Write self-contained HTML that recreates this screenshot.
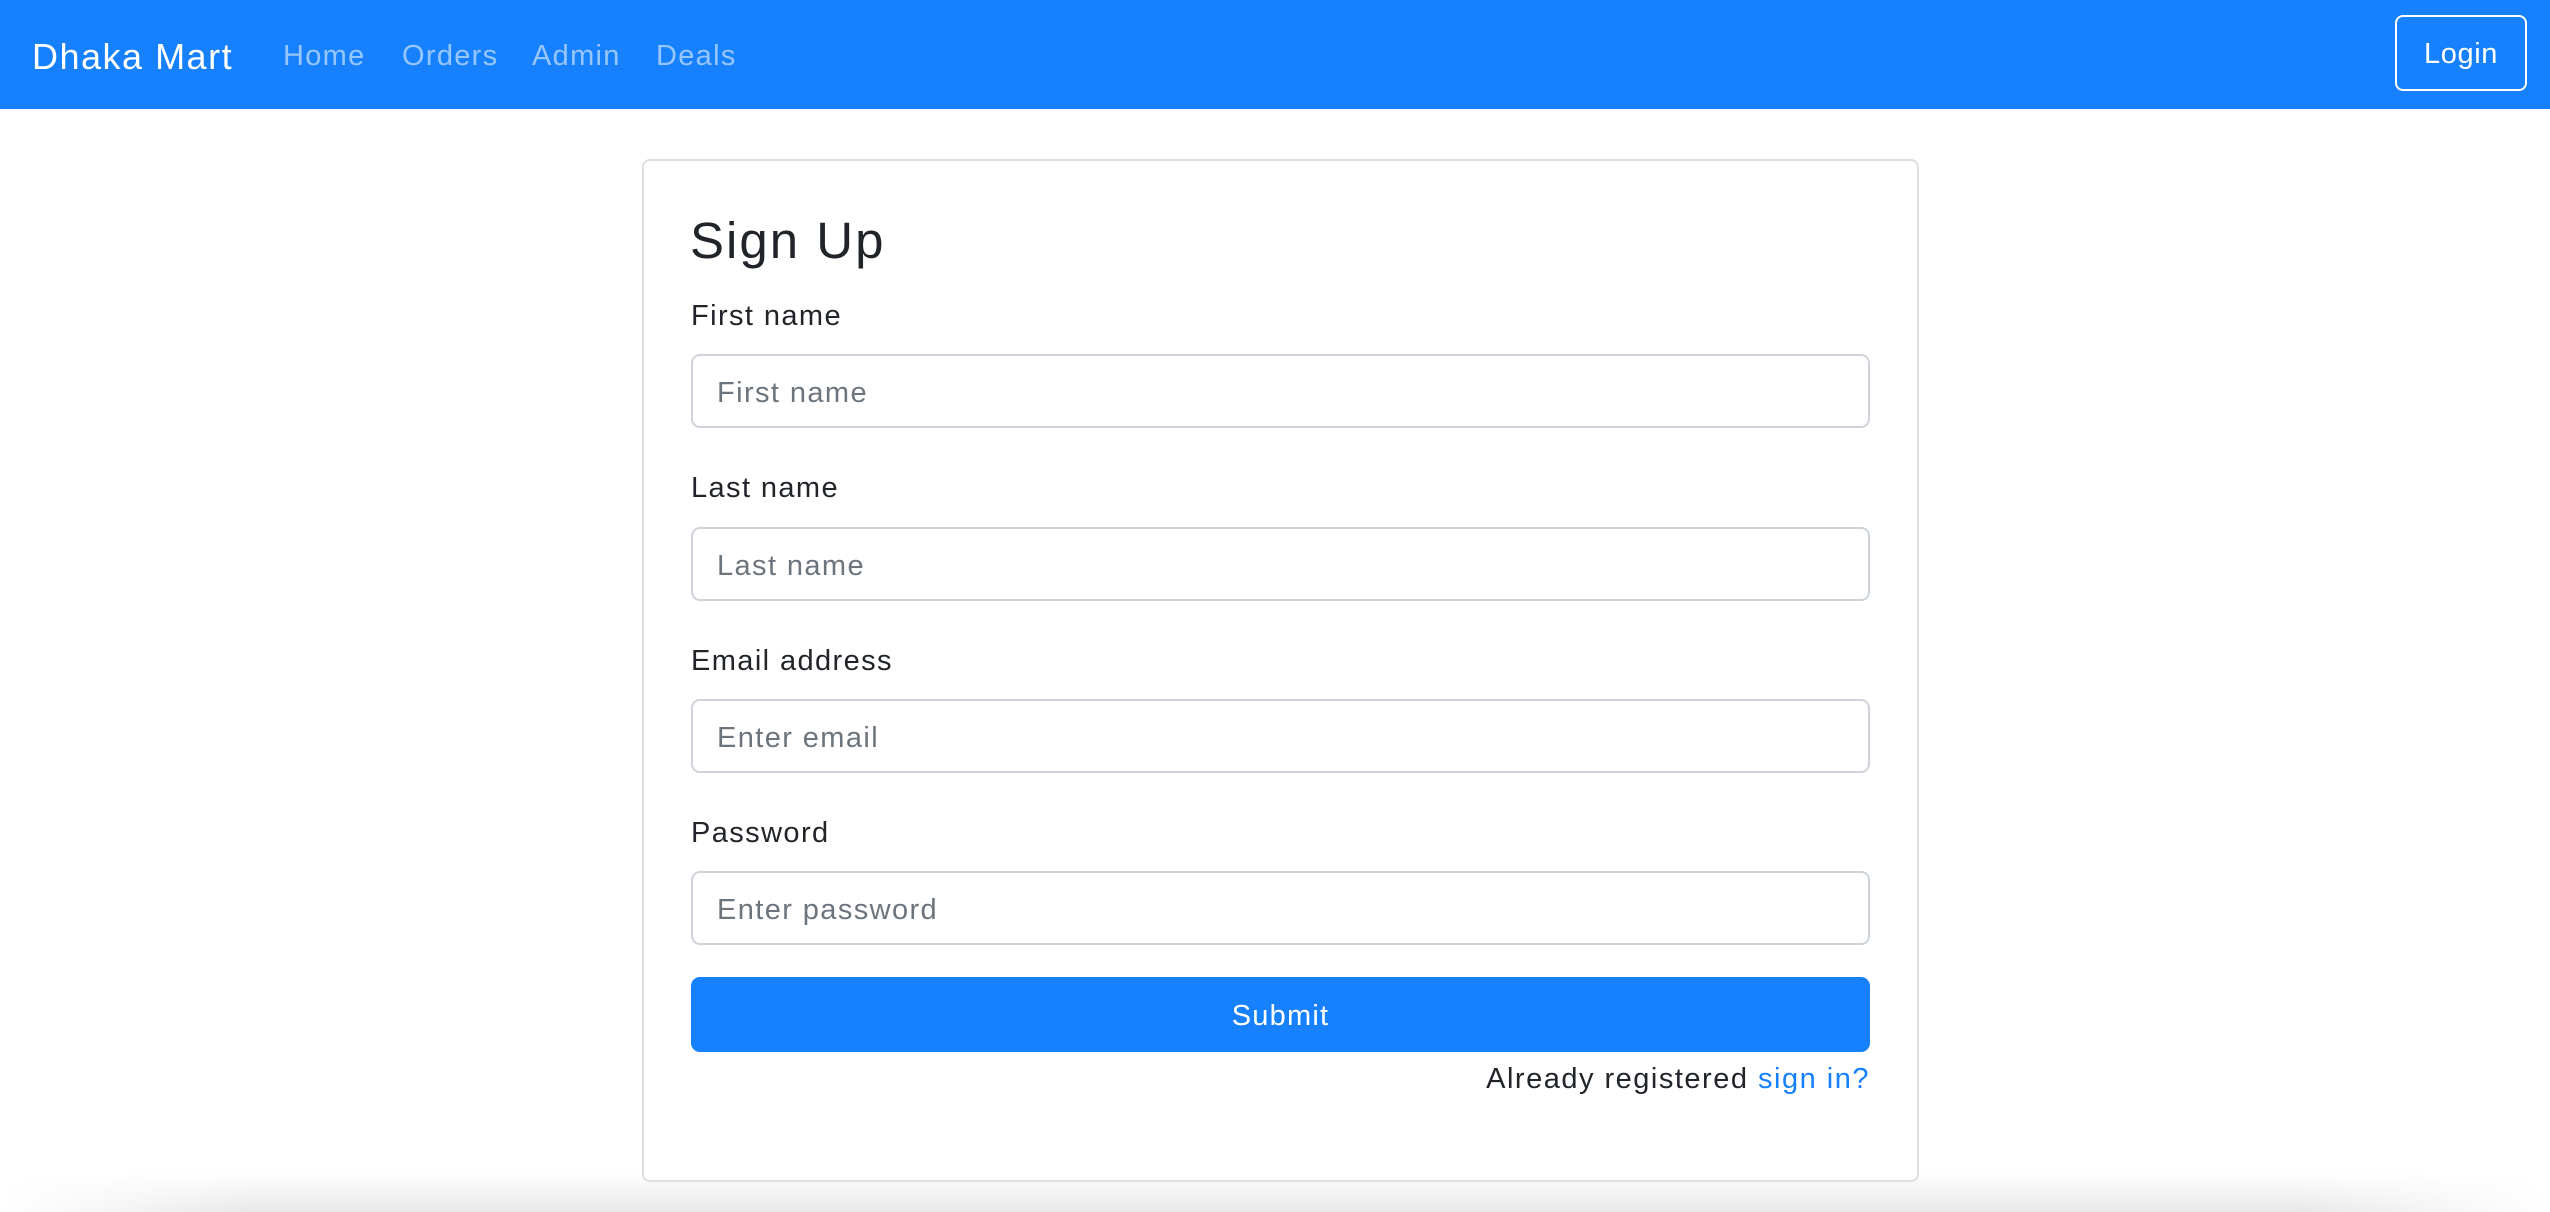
<!DOCTYPE html>
<html><head><meta charset="utf-8"><style>
*{box-sizing:border-box;margin:0;padding:0}
html,body{width:2550px;height:1212px;overflow:hidden;background:#fff;font-family:"Liberation Sans",Arial,sans-serif;color:#212529;position:relative}
.nav{position:absolute;left:0;top:0;width:2550px;height:109px;background:#1781fd}
.a{position:absolute;white-space:nowrap;line-height:1}
.brand{left:32px;top:39px;font-size:36px;letter-spacing:1.5px;color:#fff}
.lnk{top:42px;font-size:29px;letter-spacing:1.3px;color:rgba(255,255,255,.55)}
.login{position:absolute;left:2395px;top:15px;width:132px;height:76px;border:2px solid #fff;border-radius:8px;color:#fff;font-size:29px;letter-spacing:0.6px;padding-top:3px;display:flex;align-items:center;justify-content:center}
.card{position:absolute;left:642px;top:159px;width:1277px;height:1023px;border:2px solid #dcdee0;border-radius:8px;background:#fff}
.h{left:690px;top:215px;font-size:51px;letter-spacing:2px;color:#212529}
.lab{left:691px;font-size:29px;letter-spacing:1.4px;color:#212529}
.inp{position:absolute;left:691px;width:1179px;height:74px;border:2px solid #ced4da;border-radius:9px;font-size:29px;letter-spacing:1.4px;color:#6c757d;padding-left:24px;padding-top:4px;display:flex;align-items:center}
.btn{position:absolute;left:691px;top:977px;width:1179px;height:75px;background:#1781fd;border-radius:9px;color:#fff;font-size:29px;letter-spacing:1.2px;padding-top:4px;display:flex;align-items:center;justify-content:center}
.already{right:680px;top:1065px;font-size:29px;letter-spacing:1.5px}
.already span{color:#1781fd}
.shadow{position:absolute;left:0;top:1172px;width:2550px;height:40px;background:linear-gradient(to bottom,rgba(0,0,0,0),rgba(0,0,0,.09));-webkit-mask-image:linear-gradient(to right,transparent 0,#000 10%,#000 90%,transparent 100%);mask-image:linear-gradient(to right,transparent 0,#000 10%,#000 90%,transparent 100%)}
</style></head><body>
<div class="nav">
<div class="a brand">Dhaka Mart</div>
<div class="a lnk" style="left:283px">Home</div>
<div class="a lnk" style="left:402px">Orders</div>
<div class="a lnk" style="left:532px">Admin</div>
<div class="a lnk" style="left:656px">Deals</div>
<div class="login">Login</div>
</div>
<div class="shadow"></div>
<div class="card"></div>
<div class="a h">Sign Up</div>
<div class="a lab" style="top:302px">First name</div>
<div class="inp" style="top:354px">First name</div>
<div class="a lab" style="top:474px">Last name</div>
<div class="inp" style="top:527px">Last name</div>
<div class="a lab" style="top:647px">Email address</div>
<div class="inp" style="top:699px">Enter email</div>
<div class="a lab" style="top:819px">Password</div>
<div class="inp" style="top:871px">Enter password</div>
<div class="btn">Submit</div>
<div class="a already">Already registered <span>sign in?</span></div>
</body></html>
